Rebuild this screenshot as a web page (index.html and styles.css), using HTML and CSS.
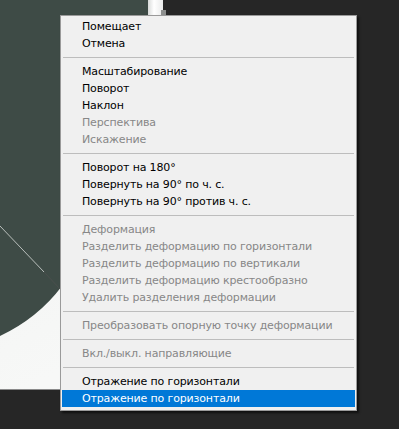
FILE: index.html
```html
<!DOCTYPE html>
<html lang="ru">
<head>
<meta charset="utf-8">
<title>Меню трансформирования</title>
<link rel="stylesheet" href="styles.css">
</head>
<body>
<div class="workspace">
  <svg class="canvas" width="399" height="429" viewBox="0 0 399 429">
    <defs>
      <linearGradient id="paper" x1="0" y1="0" x2="0.35" y2="1">
        <stop offset="0" stop-color="#c3c9c7"/>
        <stop offset="0.12" stop-color="#e6e9e8"/>
        <stop offset="0.3" stop-color="#f5f6f5"/>
        <stop offset="1" stop-color="#f7f8f7"/>
      </linearGradient>
      <linearGradient id="strip" x1="0" y1="0" x2="1" y2="0">
        <stop offset="0" stop-color="#d8dad9"/>
        <stop offset="0.4" stop-color="#ffffff"/>
        <stop offset="1" stop-color="#e9eaea"/>
      </linearGradient>
    </defs>
    <rect x="0" y="0" width="163" height="389" fill="#3e4b46"/>
    <rect x="148" y="0" width="15" height="15" fill="url(#strip)"/>
    <rect x="161" y="10" width="5" height="5" fill="#8d8f8e"/>
    <path d="M0,336 Q38,318 62,286 L80,262 L80,389 L0,389 Z" fill="url(#paper)"/>
    <line x1="0" y1="226" x2="44" y2="272" stroke="#b9bfbc" stroke-width="1"/>
    <line x1="44" y1="272" x2="62" y2="291" stroke="#4a4f4d" stroke-width="1"/>
    <rect x="0" y="389" width="80" height="1" fill="#8a8a8a"/>
  </svg>

  <ul class="menu">
    <li class="item">Помещает</li>
    <li class="item">Отмена</li>
    <li class="sep"></li>
    <li class="item">Масштабирование</li>
    <li class="item">Поворот</li>
    <li class="item">Наклон</li>
    <li class="item disabled">Перспектива</li>
    <li class="item disabled">Искажение</li>
    <li class="sep"></li>
    <li class="item">Поворот на 180°</li>
    <li class="item">Повернуть на 90° по ч. с.</li>
    <li class="item">Повернуть на 90° против ч. с.</li>
    <li class="sep"></li>
    <li class="item disabled">Деформация</li>
    <li class="item disabled">Разделить деформацию по горизонтали</li>
    <li class="item disabled">Разделить деформацию по вертикали</li>
    <li class="item disabled">Разделить деформацию крестообразно</li>
    <li class="item disabled">Удалить разделения деформации</li>
    <li class="sep"></li>
    <li class="item disabled">Преобразовать опорную точку деформации</li>
    <li class="sep"></li>
    <li class="item disabled">Вкл./выкл. направляющие</li>
    <li class="sep"></li>
    <li class="item">Отражение по горизонтали</li>
    <li class="item active">Отражение по горизонтали</li>
  </ul>
</div>
</body>
</html>
```

FILE: styles.css
```css
html, body {
  margin: 0;
  padding: 0;
}

body {
  background: #262626;
  width: 399px;
  height: 429px;
  overflow: hidden;
  font-family: "DejaVu Sans", Verdana, sans-serif;
}

.workspace {
  position: relative;
  width: 399px;
  height: 429px;
}

.canvas {
  position: absolute;
  left: 0;
  top: 0;
  display: block;
}

.menu {
  position: absolute;
  left: 60px;
  top: 15px;
  width: 293px;
  margin: 0;
  padding: 2px 1px 3px;
  list-style: none;
  background: #f0f0f0;
  border: 1px solid #9a9a9a;
  box-shadow: 2px 2px 2px rgba(0, 0, 0, 0.6);
}

.item {
  height: 17px;
  line-height: 17px;
  padding-left: 20px;
  font-size: 11px;
  letter-spacing: -0.15px;
  color: #000;
  white-space: nowrap;
}

.item.disabled {
  color: #878787;
}

.item.active {
  background: #0078d7;
  color: #ffffff;
}

.sep {
  height: 1px;
  margin: 5px 1px 5px 1px;
  background: #bdbdbd;
}
```
